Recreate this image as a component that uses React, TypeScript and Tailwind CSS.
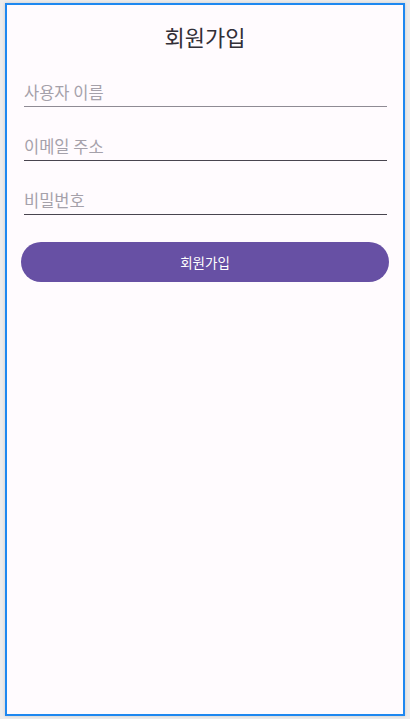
export default function App() {
	return (
		<div className="h-[719px] w-[410px] bg-[#ececec] pl-[5px] pr-[5px] pt-[3px] pb-[3px] font-['Noto_Sans_CJK_KR',sans-serif]">
			<div className="flex h-full flex-col border-2 border-[#1e88f0] bg-[#fffbfe] px-[14px] shadow-[0_0_3px_rgba(0,0,0,0.15)]">
				<h1 className="mt-[16px] text-center text-[22px] leading-[30px] text-[#322f37]">
					회원가입
				</h1>
				<div className="mt-[22px] flex flex-col gap-[20px] pl-[3px] pr-[2px]">
					<Field label="사용자 이름" lineColor="border-[#8f8b94]" />
					<Field label="이메일 주소" lineColor="border-[#49454f]" />
					<Field label="비밀번호" lineColor="border-[#49454f]" />
				</div>
				<button className="mt-[27px] h-[40px] w-full rounded-full bg-[#6750a4] text-[13.5px] text-white">
					회원가입
				</button>
			</div>
		</div>
	);
}

function Field({ label, lineColor }: { label: string; lineColor: string }) {
	return (
		<div className={`flex h-[34px] items-end border-b ${lineColor} pb-[2px]`}>
			<span className="text-[16.5px] leading-[24px] text-[#a5a1aa]">{label}</span>
		</div>
	);
}
